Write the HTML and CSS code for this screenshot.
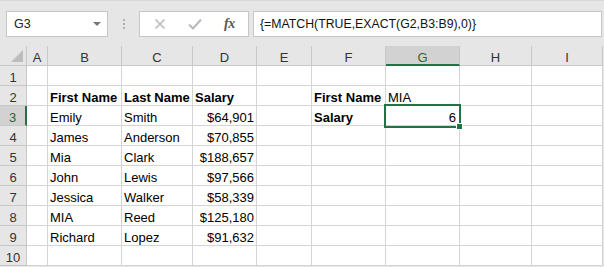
FILE: index.html
```html
<!DOCTYPE html>
<html lang="en">
<head>
  <meta charset="UTF-8">
  <title>MATCH EXACT</title>
  <link rel="stylesheet" href="styles.css">
</head>
<body>
  <!-- Barra de fórmulas -->
  <div class="toolbar">
    <div class="namebox">
      <span>G3</span>
      <span class="arrow"></span>
    </div>
    <div class="dots"><i></i><i></i><i></i></div>
    <div class="buttons">
      <svg class="icon" width="12" height="12" viewBox="0 0 12 12">
        <path d="M1.5 1.5 L10.5 10.5 M10.5 1.5 L1.5 10.5" stroke="#b9b9b9" stroke-width="1.6" fill="none"/>
      </svg>
      <svg class="icon" width="14" height="12" viewBox="0 0 14 12">
        <path d="M1 6.5 L5 10.5 L13 1.5" stroke="#b9b9b9" stroke-width="2" fill="none"/>
      </svg>
      <span class="fx">fx</span>
    </div>
    <div class="formula">{=MATCH(TRUE,EXACT(G2,B3:B9),0)}</div>
  </div>

  <!-- Planilha -->
  <div class="sheet">
    <div class="corner"><span class="tri"></span></div>
    <div class="ch">A</div>
    <div class="ch">B</div>
    <div class="ch">C</div>
    <div class="ch">D</div>
    <div class="ch">E</div>
    <div class="ch">F</div>
    <div class="ch sel-col">G</div>
    <div class="ch">H</div>
    <div class="ch">I</div>

    <div class="rh">1</div>
    <div></div><div></div><div></div><div></div><div></div><div></div><div></div><div></div><div></div>

    <div class="rh">2</div>
    <div></div>
    <div class="b">First Name</div>
    <div class="b">Last Name</div>
    <div class="b">Salary</div>
    <div></div>
    <div class="b">First Name</div>
    <div>MIA</div>
    <div></div><div></div>

    <div class="rh sel-row">3</div>
    <div></div>
    <div>Emily</div>
    <div>Smith</div>
    <div class="num">$64,901</div>
    <div></div>
    <div class="b">Salary</div>
    <div class="num active">6<span class="selbox"><span class="handle"></span></span></div>
    <div></div><div></div>

    <div class="rh">4</div>
    <div></div>
    <div>James</div>
    <div>Anderson</div>
    <div class="num">$70,855</div>
    <div></div><div></div><div></div><div></div><div></div>

    <div class="rh">5</div>
    <div></div>
    <div>Mia</div>
    <div>Clark</div>
    <div class="num">$188,657</div>
    <div></div><div></div><div></div><div></div><div></div>

    <div class="rh">6</div>
    <div></div>
    <div>John</div>
    <div>Lewis</div>
    <div class="num">$97,566</div>
    <div></div><div></div><div></div><div></div><div></div>

    <div class="rh">7</div>
    <div></div>
    <div>Jessica</div>
    <div>Walker</div>
    <div class="num">$58,339</div>
    <div></div><div></div><div></div><div></div><div></div>

    <div class="rh">8</div>
    <div></div>
    <div>MIA</div>
    <div>Reed</div>
    <div class="num">$125,180</div>
    <div></div><div></div><div></div><div></div><div></div>

    <div class="rh">9</div>
    <div></div>
    <div>Richard</div>
    <div>Lopez</div>
    <div class="num">$91,632</div>
    <div></div><div></div><div></div><div></div><div></div>

    <div class="rh">10</div>
    <div></div><div></div><div></div><div></div><div></div><div></div><div></div><div></div><div></div>
  </div>
</body>
</html>
```

FILE: styles.css
```css
body {
  margin: 0;
  background-color: #e6e6e6;
  font-family: 'Liberation Sans', Arial, sans-serif;
  overflow: hidden;
}
.toolbar {
  height: 46px;
  box-sizing: border-box;
  padding: 11px 2px 0 6px;
  display: flex;
  align-items: flex-start;
  border-top: 1px solid #d8d8d8;
}
.namebox, .buttons, .formula {
  height: 26px;
  box-sizing: border-box;
  background-color: #fff;
  border: 1px solid #c6c6c6;
  margin-top: -1px;
}
.namebox {
  width: 102px;
  display: flex;
  align-items: center;
  justify-content: space-between;
  padding: 0 6px 0 7px;
  font-size: 12.5px;
  color: #222;
}
.arrow {
  width: 0;
  height: 0;
  border-left: 4px solid transparent;
  border-right: 4px solid transparent;
  border-top: 4px solid #777;
}
.dots {
  width: 31px;
  display: flex;
  flex-direction: column;
  align-items: center;
  gap: 2px;
  padding-top: 7px;
}
.dots i {
  width: 2px;
  height: 2px;
  background-color: #b0b0b0;
}
.buttons {
  width: 110px;
  display: flex;
  align-items: center;
  padding-left: 14px;
  gap: 0;
}
.buttons .icon:first-child {
  margin-right: 22px;
}
.fx {
  margin-left: 22px;
  font-family: 'Liberation Serif', serif;
  font-style: italic;
  font-weight: bold;
  font-size: 14px;
  color: #595959;
  letter-spacing: -0.5px;
}
.formula {
  flex: 1;
  margin-left: 4px;
  padding-left: 6px;
  font-size: 12.3px;
  line-height: 24px;
  color: #111;
}
.sheet {
  display: grid;
  grid-template-columns: 27px 21px 74px 71px 64px 55px 74px 74px 72px 71px;
  grid-auto-rows: 20px;
  font-size: 13px;
  color: #000;
}
.sheet > div {
  box-sizing: border-box;
  background-color: #fff;
  border-right: 1px solid #d4d4d4;
  border-bottom: 1px solid #d4d4d4;
  padding: 3px 2px 0 2px;
  line-height: 17px;
  white-space: nowrap;
  position: relative;
}
.sheet > .ch, .sheet > .rh, .sheet > .corner {
  background-color: #e6e6e6;
  border-color: #c8c8c8;
  color: #333;
  text-align: center;
}
.sheet > .ch.sel-col {
  background-color: #d2d2d2;
  border-bottom: 2px solid #217346;
  color: #1c6a3f;
}
.sheet > .rh.sel-row {
  background-color: #d2d2d2;
  border-right: 2px solid #217346;
  color: #2d5e42;
}
.tri {
  position: absolute;
  right: 3px;
  bottom: 3px;
  width: 0;
  height: 0;
  border-left: 12px solid transparent;
  border-bottom: 12px solid #bdbdbd;
}
.b {
  font-weight: bold;
}
.sheet > .num {
  text-align: right;
}
.sheet > .active {
  z-index: 1;
  padding-right: 3px;
}
.selbox {
  position: absolute;
  left: -2px;
  top: -2px;
  width: 77px;
  height: 24px;
  box-sizing: border-box;
  border: 2px solid #217346;
}
.handle {
  position: absolute;
  right: -4px;
  bottom: -4px;
  width: 5px;
  height: 5px;
  background-color: #217346;
  border: 1px solid #fff;
}
```
